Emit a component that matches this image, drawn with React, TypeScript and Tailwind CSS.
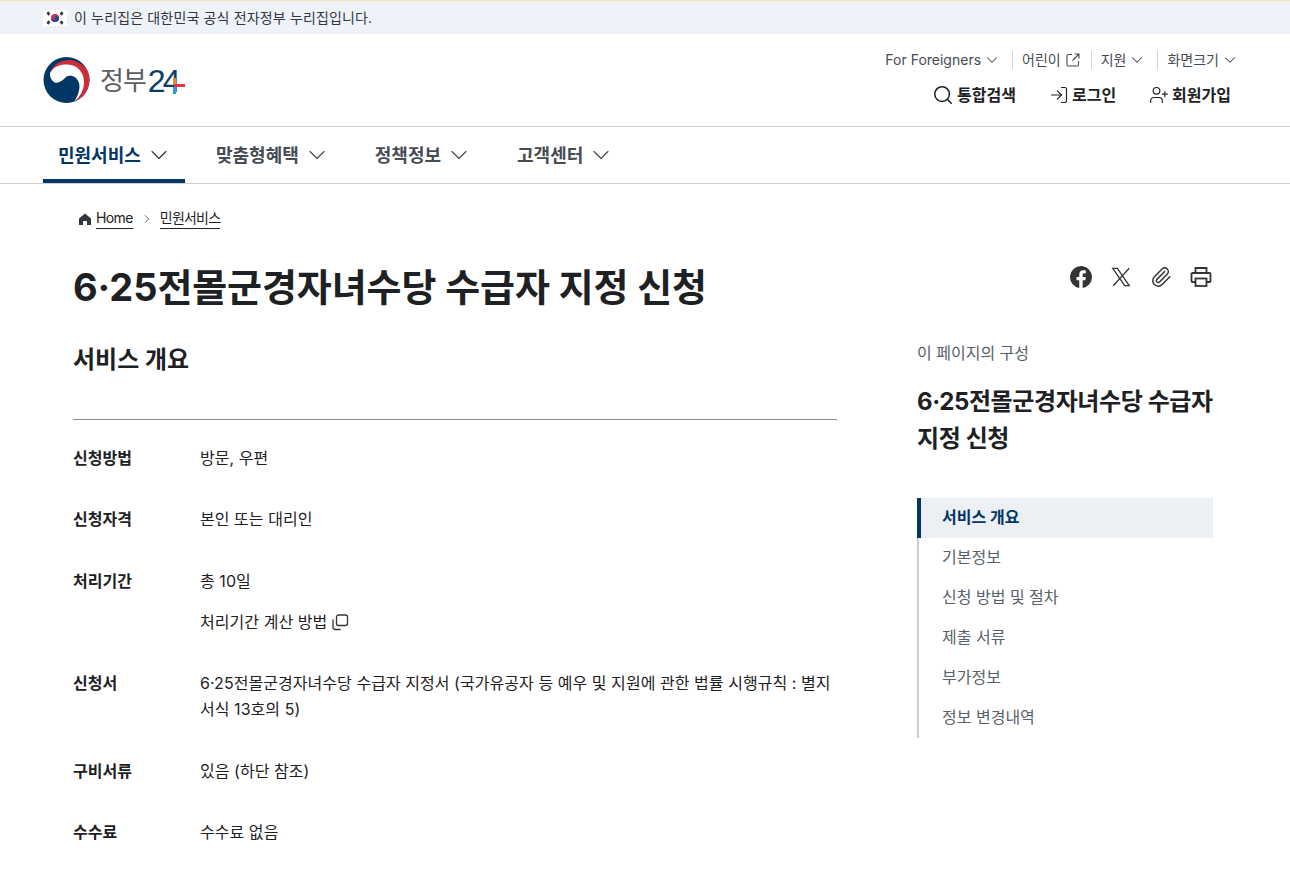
import { ChevronDown, ChevronRight, Search, LogIn, UserPlus, Paperclip } from 'lucide-react';

const FONT = "font-['Inter','Noto_Sans_CJK_KR',sans-serif]";

const TOC = ['기본정보', '신청 방법 및 절차', '제출 서류', '부가정보', '정보 변경내역'];

function Flag() {
  return (
    <svg width="24" height="16" viewBox="0 0 24 16" className="bg-white">
      <circle cx="12" cy="8" r="4" fill="#c8304a" />
      <path d="M8 8a4 4 0 0 0 8 0 2 2 0 0 0-4 0 2 2 0 0 1-4 0z" fill="#1f4e9c" />
      <g stroke="#333" strokeWidth="1.7">
        <path d="M4 3.800l2-1.800M4.800 5l2-1.800M17.200 3.200l2 1.800M18 2l2 1.800M4 12.200l2 1.800M4.800 11l2 1.800M17.200 12.800l2-1.800M18 14l2-1.800" />
      </g>
    </svg>
  );
}

function Logo() {
  return (
    <div className="flex items-center">
      <svg width="47" height="46" viewBox="0 0 47 46">
        <defs>
          <clipPath id="mark"><circle cx="23.500" cy="23" r="23" /></clipPath>
        </defs>
        <circle cx="23.500" cy="23" r="23" fill="#003764" />
        <g clipPath="url(#mark)">
          <path d="M7 16C10 7 18 3 26 3C36 3 48 12 48 24C48 34 40 41 31 45.500C37 40 38 32 38 25C37 15 33 9 25 9C18 8.500 11 10 7 16z" fill="#cd2e3a" />
          <path d="M7 16C11 9 18 7 25 7.500C34 8 41 15 41 25C41 33 37 40 31 45C35 39 37.500 32 36 26C34 19 27 17 23 20C19 24 15 27.500 11 25C8 23 6.500 19 7 16z" fill="#fff" />
        </g>
      </svg>
      <span className="ml-[10px] pt-[2px] text-[26px] leading-none tracking-[-1px] text-[#5c5e61]">정부</span>
      <span className="relative ml-[2px] pt-[1px] font-['Liberation_Sans',sans-serif] text-[32px] leading-none tracking-[-3px] text-[#0b3d68]">
        24
        <span className="absolute left-[26px] top-[20px] h-[3px] w-[11px] bg-[#e5344a]" />
        <span className="absolute left-[25px] top-[23px] h-[7px] w-[3px] bg-[#2a9bd0]" />
        <span className="absolute left-[25px] top-[14px] h-[6px] w-[3px] bg-[#ef8a2c]" />
      </span>
    </div>
  );
}

function XIcon() {
  return (
    <svg width="22" height="22" viewBox="0 0 24 24" fill="none" stroke="#333" strokeWidth="1.400">
      <path d="M3 2.500h5l13 19h-5zM21 2.500L3.500 21.500" />
    </svg>
  );
}

function FacebookIcon() {
  return (
    <svg width="22" height="22" viewBox="0 0 24 24" fill="#333">
      <path d="M24 12a12 12 0 1 0-13.900 11.900v-8.400H7.100V12h3V9.400c0-3 1.800-4.700 4.500-4.700 1.300 0 2.700.2 2.700.2v3h-1.500c-1.500 0-2 .9-2 1.900V12h3.400l-.5 3.500h-2.900v8.400A12 12 0 0 0 24 12z" />
    </svg>
  );
}

function PrintIcon() {
  return (
    <svg width="22" height="22" viewBox="0 0 22 22" fill="none" stroke="#333" strokeWidth="1.800">
      <path d="M5.500 7V2h11v5" />
      <path d="M5.500 16H2.500a1 1 0 0 1-1-1V8a1 1 0 0 1 1-1h17a1 1 0 0 1 1 1v7a1 1 0 0 1-1 1h-3" />
      <rect x="5.500" y="12.500" width="11" height="7.500" />
    </svg>
  );
}

function OpenIcon() {
  return (
    <svg width="16" height="16" viewBox="0 0 16 16" fill="none" stroke="#464c53" strokeWidth="1.100">
      <path d="M7 2.500H3.500a1.500 1.500 0 0 0-1.500 1.500v8.500a1.500 1.500 0 0 0 1.500 1.500H12a1.500 1.500 0 0 0 1.500-1.500V9" />
      <path d="M9.500 2h4.500v4.500M14 2L7.500 8.500" />
    </svg>
  );
}

function CopyIcon() {
  return (
    <svg width="18" height="18" viewBox="0 0 18 18" fill="none" stroke="#333" strokeWidth="1.300">
      <rect x="5.500" y="2" width="11" height="10.500" rx="2" />
      <path d="M2 6.500v7.500a2.500 2.500 0 0 0 2.500 2.500h5" />
    </svg>
  );
}

export default function App() {
  return (
    <div className={`${FONT} h-[871px] overflow-hidden bg-white text-[#1e2124]`}>
      {/* Gov banner */}
      <div className="flex h-[34px] items-center gap-[7px] border-t border-t-[#f6e3b5] bg-[#eef2f9] pl-[43px] text-[14px] tracking-[0.15px] text-[#33363d]">
        <Flag />
        <span>이 누리집은 대한민국 공식 전자정부 누리집입니다.</span>
      </div>

      {/* Header */}
      <header className="flex h-[93px] justify-between border-b border-[#d0d0d0] pl-[43px] pr-[51px]">
        <div className="pt-[23px]">
          <Logo />
        </div>
        <div className="flex flex-col items-end pt-[15px]">
          <div className="flex items-center text-[14px] text-[#464c53]">
            <span className="flex items-center gap-[2px] pr-[11px]">For Foreigners <ChevronDown size={18} strokeWidth={1.400} /></span>
            <span className="flex items-center gap-[4px] border-l border-[#d0d0d0] pl-[9px] pr-[10px] leading-[18px]">어린이 <OpenIcon /></span>
            <span className="flex items-center gap-[2px] border-l border-[#d0d0d0] pl-[9px] pr-[11px] leading-[18px]">지원 <ChevronDown size={18} strokeWidth={1.400} /></span>
            <span className="flex items-center gap-[2px] border-l border-[#d0d0d0] pl-[9px] leading-[18px]">화면크기 <ChevronDown size={18} strokeWidth={1.400} /></span>
          </div>
          <div className="mt-[13px] flex items-center pr-[8px] text-[16px] font-bold text-[#1e2124]">
            <span className="flex items-center gap-[3px]"><Search size={22} strokeWidth={1.700} />통합검색</span>
            <span className="ml-[33px] flex items-center gap-[3px]"><LogIn size={20} strokeWidth={1.400} />로그인</span>
            <span className="ml-[33px] flex items-center gap-[3px]"><UserPlus size={20} strokeWidth={1.400} />회원가입</span>
          </div>
        </div>
      </header>

      {/* Nav */}
      <nav className="flex h-[57px] border-b border-[#d0d0d0] pl-[43px] text-[18px] font-bold">
        <div className="flex h-[56px] w-[142px] items-center border-b-4 border-[#003764] pl-[15px] pt-[4px] text-[#003764]">
          민원서비스 <ChevronDown size={28} strokeWidth={1} className="ml-[4px] text-[#33363d]" />
        </div>
        <div className="ml-[31px] flex h-[56px] items-center gap-[4px] text-[#464c53]">
          맞춤형혜택 <ChevronDown size={28} strokeWidth={1} />
        </div>
        <div className="ml-[44px] flex h-[56px] items-center gap-[4px] text-[#464c53]">
          정책정보 <ChevronDown size={28} strokeWidth={1} />
        </div>
        <div className="ml-[44px] flex h-[56px] items-center gap-[4px] text-[#464c53]">
          고객센터 <ChevronDown size={28} strokeWidth={1} />
        </div>
      </nav>

      {/* Breadcrumb */}
      <div className="flex items-center pl-[78px] pt-[24px] text-[14px] tracking-[-0.6px] text-[#1e2124]">
        <svg width="14" height="14" viewBox="0 0 14 14" fill="#33363d"><path d="M7 1.500L1 6.500V13h4V9h4v4h4V6.500z" /></svg>
        <span className="ml-[4px] border-b border-[#1e2124] leading-[20px]">Home</span>
        <ChevronRight size={14} strokeWidth={1.400} className="ml-[7px] mr-[6px] text-[#464c53]" />
        <span className="border-b border-[#1e2124] leading-[20px] tracking-[-0.8px]">민원서비스</span>
      </div>

      {/* Title */}
      <div className="flex items-start justify-between pl-[73px] pr-[78px] pt-[30px]">
        <h1 className="text-[38px] font-bold leading-[56px] tracking-[-0.1px] text-[#1e2124]">6·25전몰군경자녀수당 수급자 지정 신청</h1>
        <div className="flex items-center gap-[18px] pt-[7px] text-[#333]">
          <FacebookIcon />
          <XIcon />
          <Paperclip size={22} strokeWidth={1.600} />
          <PrintIcon />
        </div>
      </div>

      {/* Body */}
      <div className="flex pl-[73px] pt-[26px]">
        <main className="w-[764px] pt-[3px]">
          <h2 className="text-[24px] font-bold leading-[32px]">서비스 개요</h2>
          <div className="mt-[43px] border-t border-[#8a8d91] pt-[25px] text-[16px] leading-[26px] tracking-[0.05px]">
            <div className="mb-[35px] flex">
              <div className="w-[127px] font-bold">신청방법</div>
              <div>방문, 우편</div>
            </div>
            <div className="mb-[36px] flex">
              <div className="w-[127px] font-bold">신청자격</div>
              <div>본인 또는 대리인</div>
            </div>
            <div className="mb-[35px] flex">
              <div className="w-[127px] font-bold">처리기간</div>
              <div>
                <div>총 10일</div>
                <div className="mt-[15px] flex items-center gap-[4px]">처리기간 계산 방법 <CopyIcon /></div>
              </div>
            </div>
            <div className="mb-[36px] flex">
              <div className="w-[127px] shrink-0 font-bold">신청서</div>
              <div>6·25전몰군경자녀수당 수급자 지정서 (국가유공자 등 예우 및 지원에 관한 법률 시행규칙 : 별지 서식 13호의 5)</div>
            </div>
            <div className="mb-[35px] flex">
              <div className="w-[127px] font-bold">구비서류</div>
              <div>있음 (하단 참조)</div>
            </div>
            <div className="flex">
              <div className="w-[127px] font-bold">수수료</div>
              <div>수수료 없음</div>
            </div>
          </div>
        </main>

        <aside className="ml-[80px] w-[296px]">
          <p className="-mt-[1px] text-[16px] leading-[26px] text-[#58616a]">이 페이지의 구성</p>
          <p className="mt-[17px] text-[24px] font-bold leading-[37px] tracking-[-0.4px]">6·25전몰군경자녀수당 수급자 지정 신청</p>
          <div className="mt-[41px] border-l-2 border-[#c6ced6] text-[16px] text-[#58616a]">
            <div className="-ml-[2px] flex h-[40px] items-center border-l-4 border-[#003764] bg-[#eceff3] pb-[2px] pl-[21px] font-bold text-[#003764]">서비스 개요</div>
            {TOC.map((t) => (
              <div key={t} className="flex h-[40px] items-center pb-[2px] pl-[23px]">{t}</div>
            ))}
          </div>
        </aside>
      </div>
    </div>
  );
}
